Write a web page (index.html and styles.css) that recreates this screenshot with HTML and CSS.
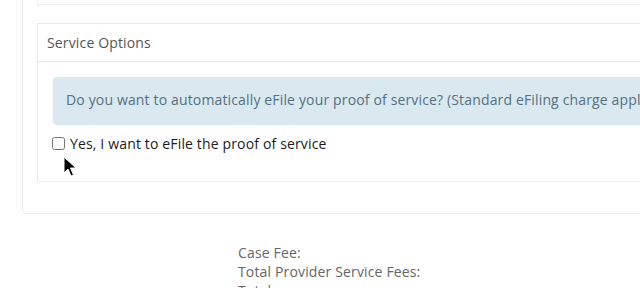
FILE: index.html
```html
<!DOCTYPE html>
<html lang="en">
<head>
<meta charset="utf-8">
<title>Service Options</title>
<link rel="stylesheet" href="styles.css">
</head>
<body>
<div class="page">
  <div class="card">
    <div class="prev-panel"></div>
    <div class="panel">
      <div class="panel-heading">Service Options</div>
      <div class="panel-body">
        <div class="alert">Do you want to automatically eFile your proof of service? (Standard eFiling charge applies)</div>
        <label class="check-row">
          <input type="checkbox" class="check">
          <span>Yes, I want to eFile the proof of service</span>
        </label>
      </div>
    </div>
  </div>
  <div class="fees">
    <div>Case Fee:</div>
    <div>Total Provider Service Fees:</div>
    <div>Total:</div>
  </div>
  <svg class="cursor" width="14" height="22" viewBox="0 0 14 22">
    <path d="M1 1 L1 17 L5 13 L8 20 L10.5 19 L7.5 12 L13 12 Z" fill="#000" stroke="#fff" stroke-width="1"/>
  </svg>
</div>
</body>
</html>
```
FILE: styles.css
```css
html, body {
  margin: 0;
  padding: 0;
  background: #fff;
  overflow: hidden;
}
body {
  font-family: "Open Sans", "Noto Sans", sans-serif;
  font-size: 14px;
  letter-spacing: 0.15px;
  color: #555;
}
.page {
  position: relative;
  width: 640px;
  height: 288px;
  overflow: hidden;
}
.card {
  margin-left: 22px;
  border: 1px solid #ececec;
  border-top: none;
  border-right: none;
  border-bottom-left-radius: 4px;
  padding: 0 0 31px 14px;
}
.prev-panel {
  height: 4px;
  border-bottom: 1px solid #ececec;
  border-left: 1px solid #f0f0f0;
  margin-bottom: 18px;
}
.panel {
  border: 1px solid #e8e8e8;
  border-right: none;
  border-bottom-color: #f0f0f0;
}
.panel-heading {
  height: 37px;
  line-height: 37px;
  padding-left: 9px;
  border-bottom: 1px solid #e6e6e6;
  color: #555;
  font-size: 14px;
}
.panel-body {
  padding: 15px 0 28px 15px;
}
.alert {
  background: #dae9f0;
  border-radius: 4px 0 0 4px;
  padding: 13px 0 15px 13px;
  line-height: 20px;
  white-space: nowrap;
  overflow: hidden;
  color: #557080;
  font-size: 14px;
}
.check-row {
  display: flex;
  align-items: center;
  margin-top: 8px;
  height: 20px;
  margin-left: -1px;
  color: #1a1a1a;
  font-size: 14px;
}
.check {
  width: 13px;
  height: 13px;
  margin: 0 5px 0 0;
}
.fees {
  margin: 29px 0 0 238px;
  line-height: 19px;
  color: #666;
  font-size: 14px;
}
.cursor {
  position: absolute;
  left: 63px;
  top: 156px;
}
```
